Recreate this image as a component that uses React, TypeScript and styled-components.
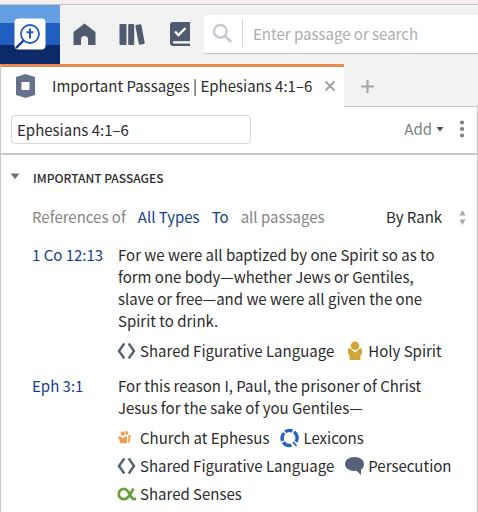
import React from 'react';
import styled, { createGlobalStyle } from 'styled-components';

const font = '"Noto Sans CJK SC", "Noto Sans", sans-serif';

const GlobalStyle = createGlobalStyle`
  *, *::before, *::after { box-sizing: border-box; }
  html, body { margin: 0; background: #fff; }
  body { color: #2b2b2b; font-family: ${font}; font-size: 15px; line-height: 22px; }
  button, input, select { font: inherit; color: inherit; }
  h2, p, ul { margin: 0; padding: 0; }
  svg { display: block; flex: none; }
`;

const Page = styled.div`
  display: flex;
  flex-direction: column;
  min-height: 100vh;
`;

const WindowEdge = styled.div`
  height: 5px;
  background: #f6eef0;
  border-bottom: 1px solid #c4c2c3;
`;

const Toolbar = styled.header`
  display: flex;
  height: 59px;
  background: #f2f2f2;
`;

const IconButton = styled.button`
  display: flex;
  align-items: center;
  justify-content: center;
  flex: none;
  padding: 0;
  border: 0;
  background: none;
  cursor: pointer;
`;

const LogoButton = styled(IconButton)`
  width: 60px;
  padding: 0 1px 1px 0;
  background: linear-gradient(#659fe2 0 18px, #205fc0 18px 40px, #0c2a68 40px);
`;

const Nav = styled.nav`
  display: flex;
  flex: none;
  gap: 24px;
  padding: 0 12px 2px;
`;

const NavButton = styled(IconButton)`
  width: 24px;
`;

const SearchBox = styled.label`
  display: flex;
  align-items: center;
  flex: 1;
  min-width: 0;
  height: 39px;
  margin-top: 10px;
  padding: 0 0 2px 8px;
  background: #fff;
  border-bottom: 1px solid #bdbdbd;
  border-radius: 3px 0 0 3px;
`;

const SearchInput = styled.input`
  flex: 1;
  min-width: 0;
  height: 28px;
  margin-left: 10px;
  padding: 0 0 0 10px;
  border: 0;
  border-left: 1px solid #d5d5da;
  outline: 0;
  background: none;
  &::placeholder { color: #adadad; opacity: 1; }
`;

const TabBar = styled.div`
  display: flex;
  height: 43px;
  background: #f2f2f2;
`;

const Tab = styled.div`
  display: flex;
  align-items: center;
  width: 344px;
  flex: none;
  padding: 0 8px 2px 14px;
  background: #fff;
  border-top: 3px solid #e98b50;
  border-left: 1px solid #c8c8c8;
`;

const TabTitle = styled.span`
  flex: 1;
  margin-left: 16px;
  white-space: nowrap;
`;

const TabRest = styled.div`
  display: flex;
  flex: 1;
  padding: 3px 0 0 16px;
  border-bottom: 1px solid #c8c8c8;
`;

const Panel = styled.main`
  flex: 1;
  border: 1px solid #c8c8c8;
  border-width: 0 1px;
`;

const PanelBar = styled.div`
  display: flex;
  align-items: center;
  height: 48px;
  padding: 0 12px 2px 10px;
  border-bottom: 2px solid #c8c8c8;
`;

const ReferenceInput = styled.input`
  width: 240px;
  height: 29px;
  padding: 0 5px;
  border: 1px solid #d4d4d4;
  border-radius: 4px;
  outline: 0;
  background: #fff;
`;

const AddButton = styled(IconButton)`
  gap: 4px;
  margin: 0 15px 0 auto;
  color: #808080;
`;

const Section = styled.section`
  padding: 12px 11px 8px 31px;
`;

const SectionTitle = styled.h2`
  display: flex;
  font-size: 12px;
  line-height: 22px;
  font-weight: 500;
`;

const CollapseButton = styled(IconButton)`
  align-items: flex-start;
  width: 32px;
  height: 22px;
  margin-left: -31px;
  padding: 4px 4px 0 0;
`;

const Filters = styled.div`
  display: flex;
  align-items: center;
  margin-top: 17px;
  color: #858585;
`;

const FilterLink = styled.a`
  margin-right: 12px;
  color: #143f8c;
  text-decoration: none;
`;

const Label = styled.span<{ $gap?: number }>`
  margin-right: ${({ $gap = 0 }) => $gap}px;
`;

const Sort = styled.label`
  display: flex;
  align-items: center;
  gap: 16px;
  margin-left: auto;
  color: #2b2b2b;
`;

const SortSelect = styled.select`
  appearance: none;
  padding: 0;
  border: 0;
  outline: 0;
  background: none;
`;

const Results = styled.ul`
  display: grid;
  gap: 13px;
  margin-top: 16px;
  list-style: none;
`;

const Result = styled.li`
  display: grid;
  grid-template-columns: 86px 1fr;
`;

const PassageLink = styled.a`
  color: #143f8c;
  text-decoration: none;
`;

const Verse = styled.p`
  padding-right: 20px;
`;

const Tags = styled.div`
  display: flex;
  flex-wrap: wrap;
  gap: 6px 11px;
  margin: 8px 0 0 -1px;
`;

const Tag = styled.span`
  display: flex;
  align-items: center;
  gap: 4px;
  white-space: nowrap;
`;

const slate = '#505b70';

const LogoIcon = () => (
  <svg width="32" height="32" viewBox="0 0 32 32" aria-hidden="true">
    <rect x="0.5" y="0.5" width="31" height="31" rx="4" fill="#fff" />
    <path d="M9.5 22.5 2 30" stroke="#12398b" strokeWidth="2.4" />
    <circle cx="16" cy="16" r="9" fill="#fff" stroke="#205fc0" strokeWidth="1.8" />
    <path d="M16 10.5v10M12.5 14.3h7" stroke="#205fc0" strokeWidth="2" />
  </svg>
);

const HomeIcon = () => (
  <svg width="24" height="24" viewBox="0 0 24 24" fill={slate} aria-hidden="true">
    <path d="m12.5 1.5 11 8.5V23H16v-5.5a3.5 3.5 0 0 0-7 0V23H1.5V10Z" />
  </svg>
);

const LibraryIcon = () => (
  <svg width="26" height="24" viewBox="0 0 26 24" fill={slate} aria-hidden="true">
    <rect x="0.5" y="2" width="7" height="21" rx="1" />
    <rect x="9.2" y="2" width="6" height="21" rx="1" />
    <rect x="18" y="2.5" width="6" height="20" rx="1" transform="rotate(-11 21 12)" />
  </svg>
);

const CheckBookIcon = () => (
  <svg width="20" height="24" viewBox="0 0 20 24" aria-hidden="true">
    <path d="M3 0h17v24H3a3 3 0 0 1-3-3V3a3 3 0 0 1 3-3Z" fill={slate} />
    <path d="M4 19.3h16v2.3H4a1.15 1.15 0 0 1 0-2.3Z" fill="#fff" />
    <path d="m5 9.5 3.5 3.5 7-7" fill="none" stroke="#fff" strokeWidth="2.4" />
  </svg>
);

const SearchIcon = () => (
  <svg width="20" height="20" viewBox="0 0 20 20" fill="none" stroke="#c9ccd6" aria-hidden="true">
    <circle cx="8.3" cy="8.3" r="6.3" strokeWidth="2.6" />
    <path d="m13 13 5.3 5.3" strokeWidth="3" strokeLinecap="round" />
  </svg>
);

const GuideIcon = () => (
  <svg width="21" height="24" viewBox="0 0 21 24" aria-hidden="true">
    <path d="M1 3 10.5 0 20 3v18l-9.5 3L1 21Z" fill="#66728a" />
    <rect x="6.5" y="8" width="8" height="8" fill="#fff" />
  </svg>
);

const CloseIcon = () => (
  <svg width="12" height="12" viewBox="0 0 12 12" stroke="#a2a2a2" strokeWidth="2" aria-hidden="true">
    <path d="m1.5 1.5 9 9m0-9-9 9" />
  </svg>
);

const PlusIcon = () => (
  <svg width="15" height="15" viewBox="0 0 15 15" stroke="#a8a8a8" strokeWidth="2.2" aria-hidden="true">
    <path d="M7.5 1v13M1 7.5h13" />
  </svg>
);

const CaretIcon = ({ size = 8, color = '#505050' }) => (
  <svg width={size} height={size} viewBox="0 0 8 8" fill={color} aria-hidden="true">
    <path d="M0.5 2h7L4 6.5Z" />
  </svg>
);

const MoreIcon = () => (
  <svg width="6" height="18" viewBox="0 0 6 18" fill="#808080" aria-hidden="true">
    <circle cx="3" cy="2.5" r="2.1" />
    <circle cx="3" cy="9" r="2.1" />
    <circle cx="3" cy="15.5" r="2.1" />
  </svg>
);

const SortIcon = () => (
  <svg width="7" height="15" viewBox="0 0 7 15" fill="#a6a6a6" aria-hidden="true">
    <path d="M0.5 5.5 3.5 0l3 5.5ZM0.5 9.500h6L3.5 15Z" />
  </svg>
);

const AngleIcon = () => (
  <svg width="19" height="18" viewBox="0 0 19 18" fill="none" stroke="#566174" strokeWidth="2.4" aria-hidden="true">
    <path d="M7.3 1.500 2 9l5.300 7.500M11.700 1.500 17 9l-5.300 7.500" />
  </svg>
);

const PersonIcon = () => (
  <svg width="19" height="20" viewBox="0 0 19 20" fill="#d0a63b" aria-hidden="true">
    <circle cx="10" cy="4.800" r="4.300" />
    <path d="M3 7.500h2.500L10 11.700 14.500 7.500H17v5.500l-1.300.8-.3 5.200H4.600l-.3-5.200L3 13Z" />
  </svg>
);

const GroupIcon = () => (
  <svg width="19" height="18" viewBox="0 0 19 18" fill="#f09a54" aria-hidden="true">
    <circle cx="5.800" cy="4.600" r="2.200" />
    <path d="M1.500 7.300h1.500l2.800 2 2.800-2H10v7H2.800v-3.800l-1.300-.5Z" />
    <path d="M7.500 2.200A2.800 2.800 0 0 1 11.500 4.200L9.800 6.300 9 5.800Q9 3.500 7.500 2.200ZM11.300 6.800l2.200-1.800-.5 8-1.700 1Z" />
  </svg>
);

const LexiconIcon = () => (
  <svg width="19" height="20" viewBox="0 0 19 20" fill="none" stroke="#2561c0" strokeWidth="3.400" aria-hidden="true">
    <path d="M5.200 3.800A7.500 7.500 0 0 1 12.500 3.100M14 3.800A7.500 7.500 0 0 1 16 13.800M11.500 17.200A7.500 7.500 0 0 1 3.300 14.200M2.600 13A7.500 7.500 0 0 1 4.200 5.100" />
    <path d="m13 14 3.500 4" strokeWidth="1.800" />
  </svg>
);

const SpeechIcon = () => (
  <svg width="19" height="18" viewBox="0 0 19 18" fill="#566077" aria-hidden="true">
    <path d="M9.500 0C15 0 19 3 19 7.200c0 2.500-1.200 4.200-3 5.500V18l-4.500-4.200C5 14.500 0 11.500 0 7.200 0 3 4 0 9.500 0Z" />
  </svg>
);

const AlphaIcon = () => (
  <svg width="19" height="14" viewBox="0 0 19 14" fill="none" stroke="#6b9f3c" strokeWidth="2.800" aria-hidden="true">
    <path d="M16.500 1.500C14 5 12.500 12.200 7 12.200A5.200 5.200 0 0 1 7 1.800c5.500 0 6 10.200 10 10.200h2" />
  </svg>
);

const tags = {
  figurative: { label: 'Shared Figurative Language', Icon: AngleIcon },
  spirit: { label: 'Holy Spirit', Icon: PersonIcon },
  church: { label: 'Church at Ephesus', Icon: GroupIcon },
  lexicons: { label: 'Lexicons', Icon: LexiconIcon },
  persecution: { label: 'Persecution', Icon: SpeechIcon },
  senses: { label: 'Shared Senses', Icon: AlphaIcon },
};

const passages = [
  {
    reference: '1 Co 12:13',
    text: 'For we were all baptized by one Spirit so as to form one body—whether Jews or Gentiles, slave or free—and we were all given the one Spirit to drink.',
    tags: [tags.figurative, tags.spirit],
  },
  {
    reference: 'Eph 3:1',
    text: 'For this reason I, Paul, the prisoner of Christ Jesus for the sake of you Gentiles—',
    tags: [tags.church, tags.lexicons, tags.figurative, tags.persecution, tags.senses],
  },
];

export default function App() {
  return (
    <Page>
      <GlobalStyle />
      <WindowEdge />
      <Toolbar>
        <LogoButton aria-label="Bible search"><LogoIcon /></LogoButton>
        <Nav>
          <NavButton aria-label="Home"><HomeIcon /></NavButton>
          <NavButton aria-label="Library"><LibraryIcon /></NavButton>
          <NavButton aria-label="Reading plan"><CheckBookIcon /></NavButton>
        </Nav>
        <SearchBox>
          <SearchIcon />
          <SearchInput aria-label="Search" placeholder="Enter passage or search" />
        </SearchBox>
      </Toolbar>
      <TabBar>
        <Tab>
          <GuideIcon />
          <TabTitle>Important Passages | Ephesians 4:1–6</TabTitle>
          <IconButton aria-label="Close tab"><CloseIcon /></IconButton>
        </Tab>
        <TabRest>
          <IconButton aria-label="New tab"><PlusIcon /></IconButton>
        </TabRest>
      </TabBar>
      <Panel>
        <PanelBar>
          <ReferenceInput aria-label="Passage" defaultValue="Ephesians 4:1–6" />
          <AddButton>Add <CaretIcon /></AddButton>
          <IconButton aria-label="More options"><MoreIcon /></IconButton>
        </PanelBar>
        <Section>
          <SectionTitle>
            <CollapseButton aria-label="Collapse section"><CaretIcon size={10} color="#707070" /></CollapseButton>
            IMPORTANT PASSAGES
          </SectionTitle>
          <Filters>
            <Label $gap={12}>References of</Label>
            <FilterLink href="#types">All Types</FilterLink>
            <FilterLink href="#direction">To</FilterLink>
            <Label>all passages</Label>
            <Sort>
              <SortSelect aria-label="Sort order" defaultValue="rank">
                <option value="rank">By Rank</option>
              </SortSelect>
              <SortIcon />
            </Sort>
          </Filters>
          <Results>
            {passages.map((passage) => (
              <Result key={passage.reference}>
                <PassageLink href="#passage">{passage.reference}</PassageLink>
                <div>
                  <Verse>{passage.text}</Verse>
                  <Tags>
                    {passage.tags.map(({ label, Icon }) => (
                      <Tag key={label}><Icon />{label}</Tag>
                    ))}
                  </Tags>
                </div>
              </Result>
            ))}
          </Results>
        </Section>
      </Panel>
    </Page>
  );
}
